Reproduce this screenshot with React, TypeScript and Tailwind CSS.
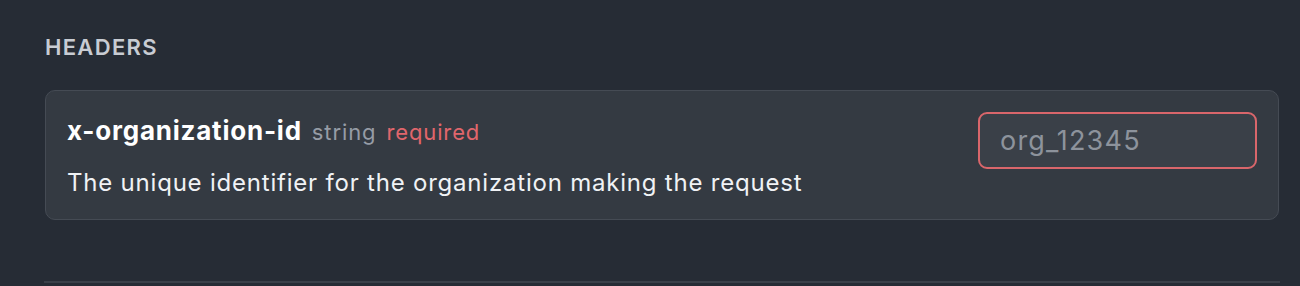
export default function App() {
  return (
    <div className="min-h-[286px] w-full bg-[#262c35] font-['Inter',sans-serif]">
      <div className="pl-[44px] pr-[20px] pt-[33px]">
        {/* Section label */}
        <div className="pl-px text-[22px] font-semibold uppercase leading-[28px] tracking-[0.06em] text-[#c8ccd3]">
          Headers
        </div>

        {/* Header param card */}
        <div className="mx-px mt-[29px] flex items-start justify-between rounded-[10px] border border-[#454b54] bg-[#343a42] px-[21px] pt-[21px] pb-[20px]">
          <div className="flex flex-col pt-[3px]">
            <div className="flex items-baseline gap-[10px]">
              <span className="text-[26px] font-bold leading-[32px] tracking-[0.03em] text-white">
                x-organization-id
              </span>
              <span className="text-[22px] leading-[32px] tracking-[0.04em] text-[#969ca6]">string</span>
              <span className="text-[22px] leading-[32px] tracking-[0.04em] text-[#e0666c]">required</span>
            </div>
            <div className="mt-[19px] text-[24px] leading-[32px] tracking-[0.033em] text-[#f0f2f5]">
              The unique identifier for the organization making the request
            </div>
          </div>
          <input
            className="h-[57px] w-[279px] rounded-[9px] border-2 border-[#d9666b] bg-[#3a4048] px-[20px] text-[27px] tracking-[0.045em] text-white outline-none placeholder:text-[#8d939c]"
            placeholder="org_12345"
          />
        </div>

        <div className="mt-[61px] h-[2px] bg-[#3a4049]" />
      </div>
    </div>
  );
}
